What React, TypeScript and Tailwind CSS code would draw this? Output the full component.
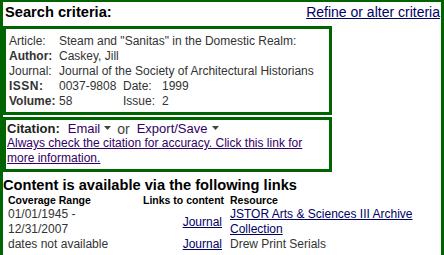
import React from "react";

function Caret() {
  return (
    <svg width="7" height="4" viewBox="0 0 7 4" className="inline-block ml-[4px] mb-[3px]">
      <path d="M0 0 H7 L3.5 4 Z" fill="#444" />
    </svg>
  );
}

export default function App() {
  return (
    <div className="w-[444px] h-[255px] overflow-hidden bg-white font-['Liberation_Sans',Arial,sans-serif]">
      <div className="h-full border-t-2 border-x-[3px] border-[#006400]">
        {/* header */}
        <div className="flex justify-between items-start h-[24px] pl-[2px] pr-[1px]">
          <span className="text-[14.67px] leading-[20px] font-bold text-black">Search criteria:</span>
          <a href="#" className="text-[14px] leading-[20px] text-[#000066] underline">
            Refine or alter criteria
          </a>
        </div>

        {/* article box */}
        <div className="w-[329px] h-[89px] border-[3px] border-[#006400] pt-[5px] pl-[3px] text-[12px] leading-[15px] text-[#333]">
          <div className="grid grid-cols-[50px_64px_39px_1fr]">
            <span>Article:</span>
            <span className="col-span-3 whitespace-nowrap">Steam and "Sanitas" in the Domestic Realm:</span>
            <span className="font-bold">Author:</span>
            <span className="col-span-3">Caskey, Jill</span>
            <span>Journal:</span>
            <span className="col-span-3 whitespace-nowrap">Journal of the Society of Architectural Historians</span>
            <span className="font-bold tracking-[0.5px]">ISSN:</span>
            <span>0037-9808</span>
            <span>Date:</span>
            <span>1999</span>
            <span className="font-bold">Volume:</span>
            <span>58</span>
            <span>Issue:</span>
            <span>2</span>
          </div>
        </div>

        {/* citation box */}
        <div className="mt-[2px] w-[329px] h-[55px] border-[3px] border-[#006400] pt-[2px] pl-[1px]">
          <div className="h-[14px] flex items-center text-[13px] leading-[14px] whitespace-nowrap">
            <span className="font-bold text-[#222]">Citation:</span>
            <span className="ml-[8px] text-[#330066]">Email</span>
            <Caret />
            <span className="ml-[6px] text-[14px] text-[#444]">or</span>
            <span className="ml-[7px] text-[#330066]">Export/Save</span>
            <Caret />
          </div>
          <a href="#" className="block text-[12px] leading-[15px] text-[#330066] underline">
            Always check the citation for accuracy. Click this link for more information.
          </a>
        </div>

        {/* content links */}
        <div className="pt-[4px] text-[14.67px] leading-[18px] font-bold text-black whitespace-nowrap">
          Content is available via the following links
        </div>
        <div className="grid grid-cols-[135px_88px_1fr] text-[12px] leading-[15px] text-[#333]">
          <span className="pl-[5px] text-[10.5px] leading-[12px] font-bold text-black whitespace-nowrap">Coverage Range</span>
          <span className="pl-[5px] text-[10.5px] leading-[12px] font-bold text-black whitespace-nowrap">Links to content</span>
          <span className="pl-[4px] text-[10.5px] leading-[12px] font-bold text-black whitespace-nowrap">Resource</span>

          <span className="pl-[5px] pt-[1px]">01/01/1945 -<br />12/31/2007</span>
          <span className="pr-[4px] pt-[2px] flex items-center justify-end">
            <a href="#" className="text-[#000066] underline">Journal</a>
          </span>
          <span className="pl-[4px] pt-[1px]">
            <a href="#" className="text-[#000066] underline">JSTOR Arts &amp; Sciences III Archive Collection</a>
          </span>

          <span className="pl-[5px]">dates not available</span>
          <span className="pr-[4px] flex items-center justify-end">
            <a href="#" className="text-[#000066] underline">Journal</a>
          </span>
          <span className="pl-[4px]">Drew Print Serials</span>
        </div>
      </div>
    </div>
  );
}
